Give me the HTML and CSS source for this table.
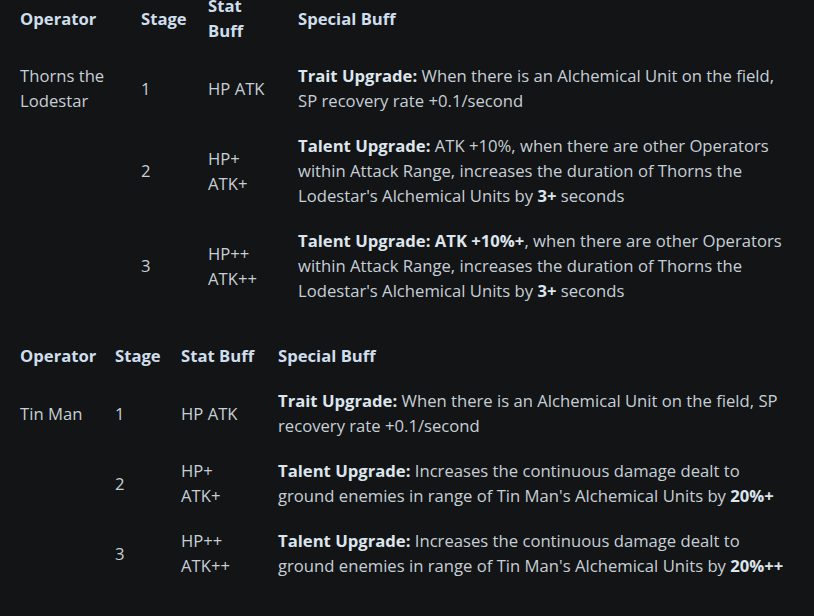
FILE: index.html
```html
<!DOCTYPE html>
<html lang="en">
<head>
<meta charset="utf-8">
<title>Operator Buffs</title>
<link rel="stylesheet" href="styles.css">
</head>
<body>
<div class="page">
  <table class="buffs first">
    <colgroup>
      <col class="c-op1"><col class="c-st1"><col class="c-sb1"><col>
    </colgroup>
    <thead>
      <tr><th>Operator</th><th>Stage</th><th class="stat">Stat Buff</th><th>Special Buff</th></tr>
    </thead>
    <tbody>
      <tr>
        <td>Thorns the Lodestar</td>
        <td>1</td><td class="stat">HP ATK</td>
        <td><b>Trait Upgrade:</b> When there is an Alchemical Unit on the field, SP recovery rate +0.1/second</td>
      </tr>
      <tr>
        <td></td>
        <td>2</td><td class="stat">HP+ ATK+</td>
        <td><b>Talent Upgrade:</b> ATK +10%, when there are other Operators within Attack Range, increases the duration of Thorns the Lodestar's Alchemical Units by <b>3+</b> seconds</td>
      </tr>
      <tr>
        <td></td>
        <td>3</td><td class="stat">HP++ ATK++</td>
        <td><b>Talent Upgrade: ATK +10%+</b>, when there are other Operators within Attack Range, increases the duration of Thorns the Lodestar's Alchemical Units by <b>3+</b> seconds</td>
      </tr>
    </tbody>
  </table>

  <table class="buffs second">
    <colgroup>
      <col class="c-op2"><col class="c-st2"><col class="c-sb2"><col>
    </colgroup>
    <thead>
      <tr><th>Operator</th><th>Stage</th><th class="stat">Stat Buff</th><th>Special Buff</th></tr>
    </thead>
    <tbody>
      <tr>
        <td>Tin Man</td>
        <td>1</td><td class="stat">HP ATK</td>
        <td><b>Trait Upgrade:</b> When there is an Alchemical Unit on the field, SP recovery rate +0.1/second</td>
      </tr>
      <tr>
        <td></td>
        <td>2</td><td class="stat">HP+ ATK+</td>
        <td><b>Talent Upgrade:</b> Increases the continuous damage dealt to ground enemies in range of Tin Man's Alchemical Units by <b>20%+</b></td>
      </tr>
      <tr>
        <td></td>
        <td>3</td><td class="stat">HP++ ATK++</td>
        <td><b>Talent Upgrade:</b> Increases the continuous damage dealt to ground enemies in range of Tin Man's Alchemical Units by <b>20%++</b></td>
      </tr>
    </tbody>
  </table>
</div>
</body>
</html>
```
FILE: styles.css
```css
html, body {
  margin: 0;
  padding: 0;
  background: #131415;
}
body {
  height: 616px;
  overflow: hidden;
}
.page {
  padding: 0 14px 0 10px;
  font-family: "Open Sans", "Noto Sans", sans-serif;
  font-size: 16.67px;
  line-height: 25px;
  color: #c6cfd7;
}
.buffs {
  width: 790px;
  table-layout: fixed;
  border-collapse: collapse;
  border-spacing: 0;
}
.buffs.first {
  margin-top: -17px;
}
.buffs.second {
  margin-top: 20px;
}
.buffs th,
.buffs td {
  padding: 10px;
  vertical-align: middle;
  text-align: left;
}
.buffs th {
  font-weight: 700;
  color: #cfdeec;
}
.buffs b {
  color: #dde5ed;
  font-weight: 700;
}
.buffs .stat {
  padding-right: 12px;
}
.c-op1 { width: 121px; }
.c-st1 { width: 67px; }
.c-sb1 { width: 90px; }
.c-op2 { width: 95px; }
.c-st2 { width: 66px; }
.c-sb2 { width: 97px; }
```
